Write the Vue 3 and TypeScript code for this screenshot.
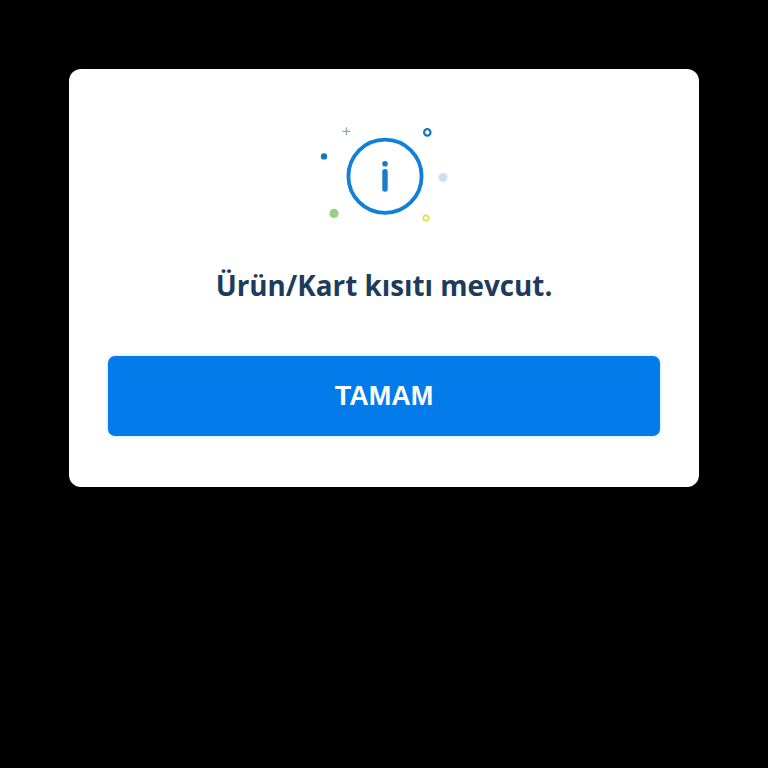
<template>
  <div class="screen">
    <div class="dialog">
      <svg class="info-icon" width="132" height="100" viewBox="0 0 132 100" aria-hidden="true">
        <circle cx="67" cy="54.3" r="36.6" fill="none" stroke="#1180d8" stroke-width="3.8" />
        <circle cx="67" cy="41.7" r="2.8" fill="#1a7cc9" />
        <rect x="64.3" y="47" width="5.4" height="22.7" rx="2.7" fill="#1a7cc9" />
        <path d="M28.5 5.3v8M24.5 9.3h8" stroke="#9aa3b0" stroke-width="1.3" fill="none" />
        <circle cx="109.3" cy="10.4" r="3.2" fill="none" stroke="#1b76bd" stroke-width="2.2" />
        <circle cx="6" cy="34.4" r="3.2" fill="#1b76bd" />
        <circle cx="125" cy="55.4" r="4.5" fill="#c5e2f4" />
        <circle cx="16" cy="91.4" r="4.6" fill="#93d47e" />
        <circle cx="108" cy="96" r="2.7" fill="none" stroke="#e4dc4e" stroke-width="1.7" />
      </svg>
      <h1 class="message">Ürün/Kart kısıtı mevcut.</h1>
      <button class="ok-button" type="button">TAMAM</button>
    </div>
  </div>
</template>

<script setup lang="ts">
</script>

<style>
html,
body {
  background: #000;
}
</style>

<style scoped>
.screen {
  display: flex;
  justify-content: center;
  width: 768px;
  height: 768px;
  padding-top: 69px;
  box-sizing: border-box;
  background: #000;
}

.dialog {
  display: flex;
  flex-direction: column;
  align-items: center;
  width: 630px;
  height: 418px;
  padding: 53px 39px 0;
  box-sizing: border-box;
  background: #fff;
  border-radius: 12px;
}

.info-icon {
  display: block;
  flex: none;
  margin-right: 1px;
}

.message {
  margin: 45px 0 0;
  font-family: "Open Sans", sans-serif;
  font-size: 27.8px;
  line-height: 36px;
  font-weight: 700;
  color: #1d3b5c;
  white-space: nowrap;
}

.ok-button {
  width: 552px;
  height: 80px;
  margin-top: 53px;
  border: 0;
  border-radius: 7px;
  background: #047bea;
  box-shadow: 0 0 4px rgba(4, 123, 234, 0.25);
  font-family: "Liberation Sans", sans-serif;
  font-size: 27px;
  font-weight: 700;
  color: #fff;
}
</style>
